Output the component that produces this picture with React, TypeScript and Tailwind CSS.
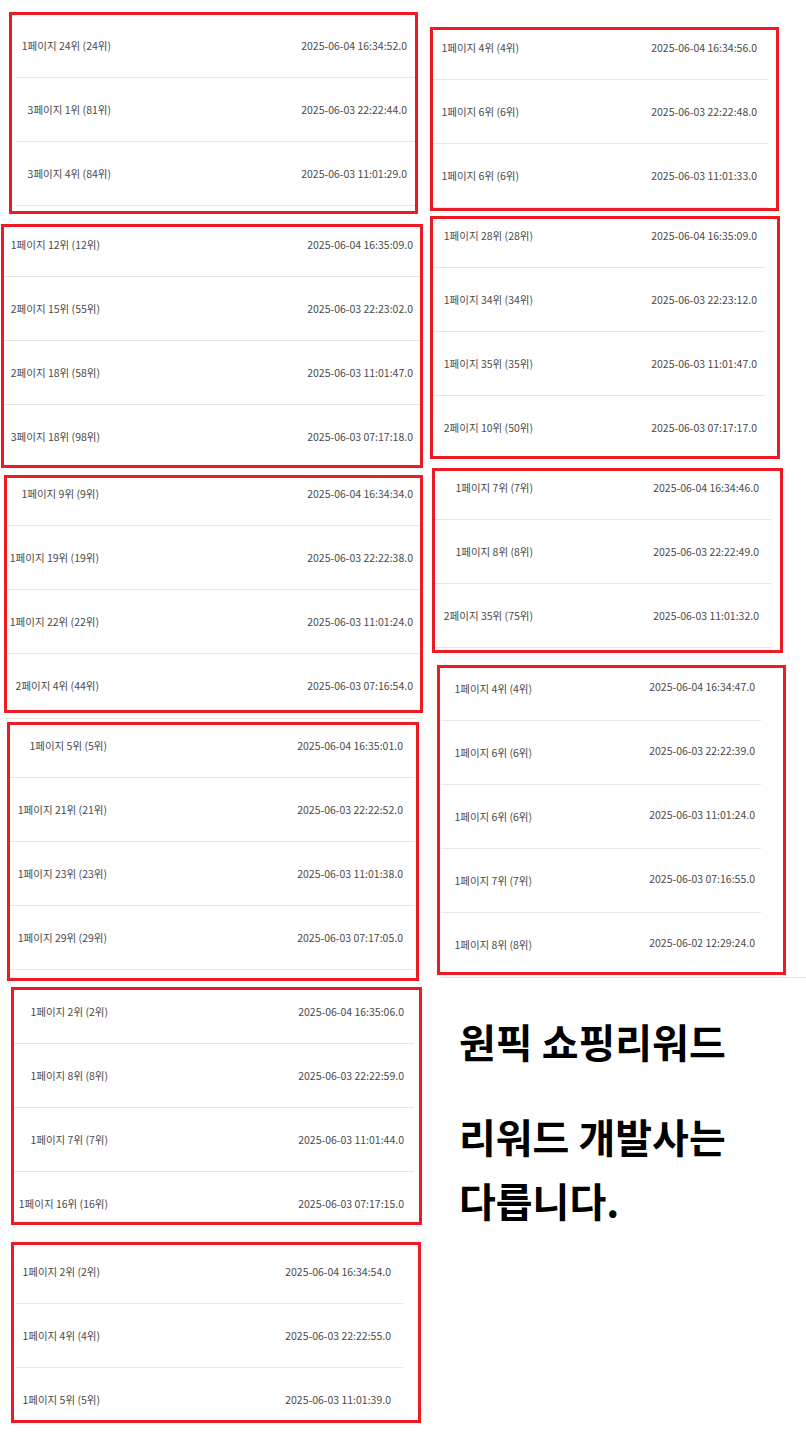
import React from "react";

type Row = [string, string];

type Box = {
  box: string; // 바깥 빨간 테두리 위치/크기
  inner: string; // 첫 줄 오프셋
  row: string; // 구분선 위치/길이
  label: string; // 순위 칸 너비
  date: string; // 날짜 오른쪽 여백
  rows: Row[];
};

const leftBoxes: Box[] = [
  {
    box: "ml-[9px] mt-[12px] w-[409px] h-[202px]",
    inner: "-mt-[1px]",
    row: "ml-[4px] w-[399px]",
    label: "w-[95px]",
    date: "pr-[8px]",
    rows: [
      ["1페이지 24위 (24위)", "2025-06-04 16:34:52.0"],
      ["3페이지 1위 (81위)", "2025-06-03 22:22:44.0"],
      ["3페이지 4위 (84위)", "2025-06-03 11:01:29.0"],
    ],
  },
  {
    box: "ml-[1px] mt-[10px] w-[422px] h-[244px]",
    inner: "-mt-[14px]",
    row: "ml-0 w-[416px]",
    label: "w-[96px]",
    date: "pr-[7px]",
    rows: [
      ["1페이지 12위 (12위)", "2025-06-04 16:35:09.0"],
      ["2페이지 15위 (55위)", "2025-06-03 22:23:02.0"],
      ["2페이지 18위 (58위)", "2025-06-03 11:01:47.0"],
      ["3페이지 18위 (98위)", "2025-06-03 07:17:18.0"],
    ],
  },
  {
    box: "ml-[4px] mt-[7px] w-[419px] h-[238px]",
    inner: "-mt-[16px]",
    row: "ml-0 w-[413px]",
    label: "w-[92px]",
    date: "pr-[7px]",
    rows: [
      ["1페이지 9위 (9위)", "2025-06-04 16:34:34.0"],
      ["1페이지 19위 (19위)", "2025-06-03 22:22:38.0"],
      ["1페이지 22위 (22위)", "2025-06-03 11:01:24.0"],
      ["2페이지 4위 (44위)", "2025-06-03 07:16:54.0"],
    ],
  },
  {
    box: "ml-[7px] mt-[3px] w-[412px] h-[259px]",
    inner: "-mt-[11px]",
    row: "ml-0 w-[405px]",
    label: "w-[97px]",
    date: "pr-[12px]",
    rows: [
      ["1페이지 5위 (5위)", "2025-06-04 16:35:01.0"],
      ["1페이지 21위 (21위)", "2025-06-03 22:22:52.0"],
      ["1페이지 23위 (23위)", "2025-06-03 11:01:38.0"],
      ["1페이지 29위 (29위)", "2025-06-03 07:17:05.0"],
    ],
  },
  {
    box: "ml-[11px] mt-[6px] w-[411px] h-[238px]",
    inner: "-mt-[10px]",
    row: "ml-0 w-[400px]",
    label: "w-[94px]",
    date: "pr-[10px]",
    rows: [
      ["1페이지 2위 (2위)", "2025-06-04 16:35:06.0"],
      ["1페이지 8위 (8위)", "2025-06-03 22:22:59.0"],
      ["1페이지 7위 (7위)", "2025-06-03 11:01:44.0"],
      ["1페이지 16위 (16위)", "2025-06-03 07:17:15.0"],
    ],
  },
  {
    box: "ml-[11px] mt-[17px] w-[410px] h-[181px]",
    inner: "-mt-[5px]",
    row: "ml-[2px] w-[387px]",
    label: "w-[84px]",
    date: "pr-[12px]",
    rows: [
      ["1페이지 2위 (2위)", "2025-06-04 16:34:54.0"],
      ["1페이지 4위 (4위)", "2025-06-03 22:22:55.0"],
      ["1페이지 5위 (5위)", "2025-06-03 11:01:39.0"],
    ],
  },
];

const rightBoxes: Box[] = [
  {
    box: "ml-[4px] mt-[27px] w-[349px] h-[184px]",
    inner: "-mt-[14px]",
    row: "ml-0 w-[335px]",
    label: "w-[86px]",
    date: "pr-[11px]",
    rows: [
      ["1페이지 4위 (4위)", "2025-06-04 16:34:56.0"],
      ["1페이지 6위 (6위)", "2025-06-03 22:22:48.0"],
      ["1페이지 6위 (6위)", "2025-06-03 11:01:33.0"],
    ],
  },
  {
    box: "ml-[4px] mt-[5px] w-[350px] h-[243px]",
    inner: "-mt-[15px]",
    row: "ml-0 w-[332px]",
    label: "w-[100px]",
    date: "pr-[8px]",
    rows: [
      ["1페이지 28위 (28위)", "2025-06-04 16:35:09.0"],
      ["1페이지 34위 (34위)", "2025-06-03 22:23:12.0"],
      ["1페이지 35위 (35위)", "2025-06-03 11:01:47.0"],
      ["2페이지 10위 (50위)", "2025-06-03 07:17:17.0"],
    ],
  },
  {
    box: "ml-[6px] mt-[9px] w-[351px] h-[185px]",
    inner: "-mt-[15px]",
    row: "ml-0 w-[336px]",
    label: "w-[98px]",
    date: "pr-[12px]",
    rows: [
      ["1페이지 7위 (7위)", "2025-06-04 16:34:46.0"],
      ["1페이지 8위 (8위)", "2025-06-03 22:22:49.0"],
      ["2페이지 35위 (75위)", "2025-06-03 11:01:32.0"],
    ],
  },
  {
    box: "ml-[11px] mt-[12px] w-[349px] h-[310px]",
    inner: "-mt-[11px]",
    row: "ml-[1px] w-[320px]",
    label: "w-[91px]",
    date: "pr-[6px] -translate-y-[2px]",
    rows: [
      ["1페이지 4위 (4위)", "2025-06-04 16:34:47.0"],
      ["1페이지 6위 (6위)", "2025-06-03 22:22:39.0"],
      ["1페이지 6위 (6위)", "2025-06-03 11:01:24.0"],
      ["1페이지 7위 (7위)", "2025-06-03 07:16:55.0"],
      ["1페이지 8위 (8위)", "2025-06-02 12:29:24.0"],
    ],
  },
];

function RankBox({ b }: { b: Box }) {
  return (
    <div className={`${b.box} shrink-0 overflow-hidden border-[3px] border-[#ed1c24] bg-white`}>
      <div className={b.inner}>
        {b.rows.map(([label, date], i) => (
          <div
            key={i}
            className={`${b.row} flex h-16 items-center border-b border-[#e6e6e6] text-[10.5px] text-[#4a4a4a]`}
          >
            <span className={`${b.label} shrink-0 whitespace-nowrap text-right`}>{label}</span>
            <span className={`${b.date} ml-auto whitespace-nowrap`}>{date}</span>
          </div>
        ))}
      </div>
    </div>
  );
}

export default function App() {
  return (
    <div className="flex h-[1438px] w-[806px] overflow-hidden bg-white font-['Noto_Sans_CJK_KR','Noto_Sans',sans-serif]">
      {/* 왼쪽 캡처 묶음 */}
      <div className="flex w-[426px] shrink-0 flex-col items-start">
        {leftBoxes.slice(0, 3).map((b, i) => (
          <RankBox key={i} b={b} />
        ))}
        <div className="ml-[3px] mt-[5px] h-px w-[412px] bg-[#e6e6e6]" />
        {leftBoxes.slice(3).map((b, i) => (
          <RankBox key={i + 3} b={b} />
        ))}
      </div>

      {/* 오른쪽 캡처 + 문구 */}
      <div className="flex flex-1 flex-col items-start">
        {rightBoxes.map((b, i) => (
          <RankBox key={i} b={b} />
        ))}
        <div className="ml-[15px] mt-[2px] h-px w-[365px] bg-[#e6e6e6]" />
        <div className="ml-[33px] mt-[31px] text-[40px] font-bold text-black">
          <div className="leading-[64px] whitespace-nowrap">원픽 쇼핑리워드</div>
          <div className="mt-[31px] leading-[64px] whitespace-nowrap">리워드 개발사는</div>
          <div className="leading-[64px] whitespace-nowrap">다릅니다.</div>
        </div>
      </div>
    </div>
  );
}
